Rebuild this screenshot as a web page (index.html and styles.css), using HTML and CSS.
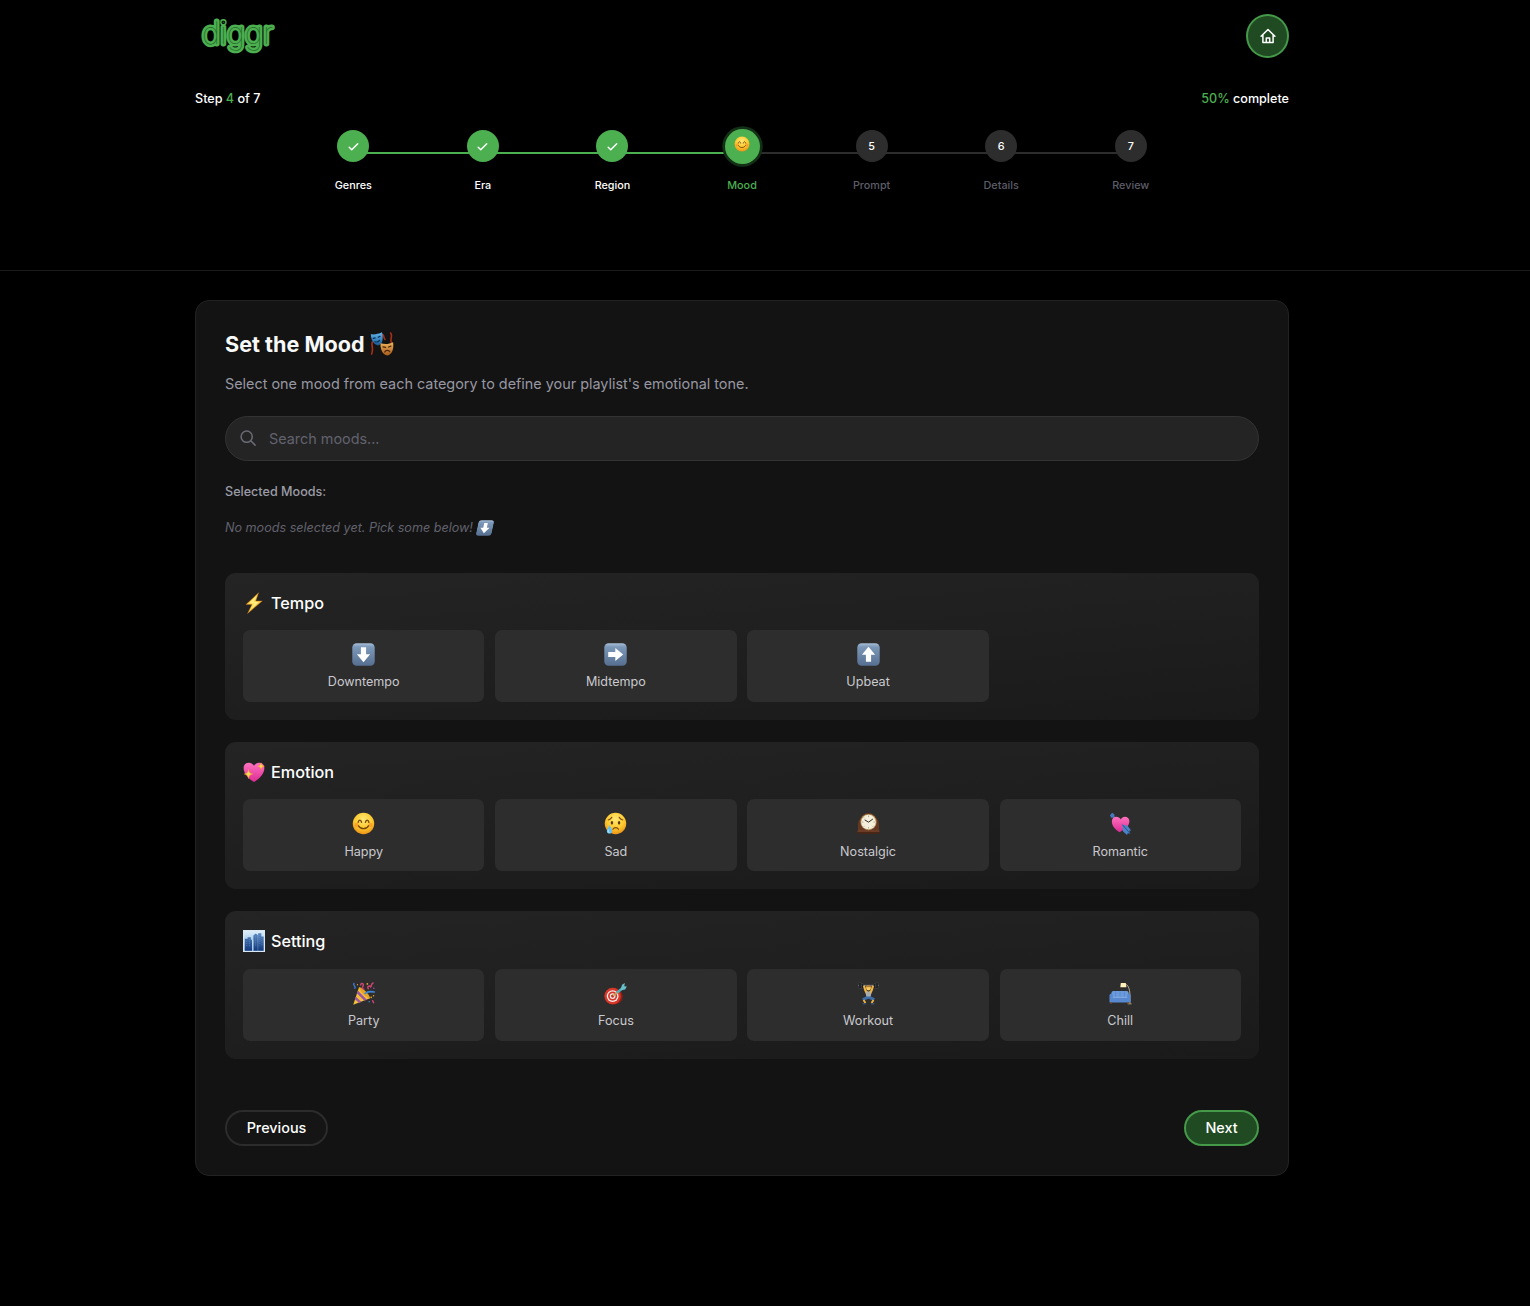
FILE: index.html
```html
<!DOCTYPE html>
<html lang="en">
<head>
<meta charset="utf-8">
<title>diggr – Set the Mood</title>
<link rel="stylesheet" href="styles.css">
</head>
<body>
<svg class="sprite" aria-hidden="true">
  <defs>
    <linearGradient id="g-key" x1="0" y1="0" x2="0" y2="1"><stop offset="0" stop-color="#a9bfd8"/><stop offset=".16" stop-color="#7c98b9"/><stop offset="1" stop-color="#566f90"/></linearGradient>
    <radialGradient id="g-face" cx=".5" cy=".3" r=".75"><stop offset="0" stop-color="#ffe873"/><stop offset=".55" stop-color="#fdc92e"/><stop offset="1" stop-color="#e98a14"/></radialGradient>
    <linearGradient id="g-heart" x1="0" y1="0" x2="0" y2="1"><stop offset="0" stop-color="#ff72c0"/><stop offset="1" stop-color="#dc2b93"/></linearGradient>
    <linearGradient id="g-bolt" x1="0" y1="0" x2="1" y2="1"><stop offset="0" stop-color="#f39a1e"/><stop offset=".5" stop-color="#ffdf52"/><stop offset="1" stop-color="#e88d19"/></linearGradient>
    <linearGradient id="g-blue" x1="0" y1="0" x2="0" y2="1"><stop offset="0" stop-color="#63b7ef"/><stop offset="1" stop-color="#175795"/></linearGradient>
    <linearGradient id="g-gold" x1="0" y1="0" x2="0" y2="1"><stop offset="0" stop-color="#eeb45b"/><stop offset="1" stop-color="#a85b1c"/></linearGradient>
    <linearGradient id="g-sky" x1="0" y1="0" x2="0" y2="1"><stop offset="0" stop-color="#dceefa"/><stop offset="1" stop-color="#6ea9dc"/></linearGradient>
    <linearGradient id="g-tower" x1="0" y1="0" x2="0" y2="1"><stop offset="0" stop-color="#5b88c2"/><stop offset="1" stop-color="#153a7d"/></linearGradient>
  </defs>
  <symbol id="e-down" viewBox="0 0 24 24"><rect x=".3" y=".3" width="23.4" height="23.4" rx="4.5" fill="url(#g-key)"/><path d="M9.3 4.5h5.4v7.3h4.2L12 20 5.1 11.8h4.2z" fill="#fff"/></symbol>
  <symbol id="e-right" viewBox="0 0 24 24"><rect x=".3" y=".3" width="23.4" height="23.4" rx="4.5" fill="url(#g-key)"/><path d="M4.4 9.3v5.4h7.4v4.2L20 12 11.8 5.1v4.2z" fill="#fff"/></symbol>
  <symbol id="e-up" viewBox="0 0 24 24"><rect x=".3" y=".3" width="23.4" height="23.4" rx="4.5" fill="url(#g-key)"/><path d="M9.3 19.5h5.4v-7.3h4.2L12 4 5.1 12.2h4.2z" fill="#fff"/></symbol>
  <symbol id="e-happy" viewBox="0 0 24 24">
    <circle cx="12" cy="12" r="11.2" fill="url(#g-face)"/>
    <g fill="none" stroke="#76480d" stroke-linecap="round"><path d="M6.4 10.7c.7-3 2.900-3 3.600 0M14 10.700c.7-3 2.900-3 3.600 0" stroke-width="1.4"/><path d="M6.600 14.200c2.500 4.300 8.300 4.300 10.800 0" stroke-width="1.3"/></g>
    <circle cx="4.8" cy="13.5" r="2.2" fill="#f57b24" opacity=".45"/><circle cx="19.2" cy="13.5" r="2.2" fill="#f57b24" opacity=".45"/>
  </symbol>
  <symbol id="e-sad" viewBox="0 0 24 24">
    <circle cx="12" cy="12" r="11.2" fill="url(#g-face)"/>
    <ellipse cx="8.3" cy="11.3" rx="1.3" ry="1.9" fill="#5e3a10"/><ellipse cx="15.7" cy="11.3" rx="1.3" ry="1.9" fill="#5e3a10"/>
    <path d="M4.400 8.300c1.600-.4 3-1.400 3.700-2.700M19.600 8.300c-1.600-.4-3-1.400-3.700-2.700M9.300 18c1.300-2.200 4.500-2.200 5.800 0" fill="none" stroke="#76480d" stroke-width="1.2" stroke-linecap="round"/>
    <path d="M5.800 13.600c1.300 2.800 2.600 4.400 2.600 6.100a2.700 2.700 0 0 1-5.400 0c0-1.700 1.600-3.300 2.800-6.100z" fill="#64c0f2"/><path d="M4.500 18.500c-.6 2 .2 3 1.300 3" stroke="#c8ecff" fill="none"/>
  </symbol>
  <symbol id="e-masks" viewBox="0 0 24 24">
    <path d="M2.300 10c-1.200 4 1.500 6-.6 12M20.600 1c2.600 3-1.200 6 1 10M12.500 2.500c2 1 .6 3 2.500 5" fill="none" stroke="#a92f16" stroke-width="1.6" stroke-linecap="round"/>
    <path d="M.8 2.300C4.800 2.700 8.600 2 12 .3c1.400 5.300 1.200 12-4 13.200C3.200 12.300 1 7.200.8 2.300z" fill="url(#g-blue)"/>
    <path d="M3.200 6.300l2-.5M8.200 5.200l1.800-.8M5 9.700c1.600.6 3.300.2 4.500-1.200" fill="none" stroke="#0b3156" stroke-width="1.200" stroke-linecap="round"/>
    <path d="M10.600 11.200c4.400 1.300 8.500.9 12.500-1 .9 5.700-.6 12.300-5.800 13.300-5-.7-7.300-7-6.700-12.300z" fill="url(#g-gold)"/>
    <path d="M13 14.800l2.600.5M18.600 15l2.300-.8M14.800 20c.8-2 3.900-2.200 4.900-.4" fill="none" stroke="#4e240a" stroke-width="1.300" stroke-linecap="round"/>
  </symbol>
  <symbol id="e-bolt" viewBox="0 0 24 24"><path d="M17 .8L3.200 13.700h6.600L5 23.400 21 9.800h-7.100z" fill="url(#g-bolt)" stroke="#b9691a" stroke-width=".5"/><path d="M15 3.500L6.800 12.300h5.600l-3.200 6L17.500 11h-6z" fill="#ffed86"/></symbol>
  <symbol id="e-sparkheart" viewBox="0 0 24 24">
    <path d="M12 23C5 18.500.7 13.200.7 7.600.7 1.200 9 .2 12 5.200 15 .2 23.300 1.200 23.300 7.600 23.300 13.200 19 18.500 12 23z" fill="url(#g-heart)"/>
    <path d="M6 9.200c.7 3.400 1.500 4.300 4.700 5-3.200.7-4 1.600-4.700 5-.7-3.400-1.500-4.300-4.700-5 3.200-.7 4-1.600 4.700-5zM19.700 2c.5 2.500 1.200 3.200 3.600 3.700-2.400.5-3.100 1.200-3.600 3.700-.5-2.500-1.200-3.200-3.600-3.700 2.400-.5 3.100-1.200 3.600-3.700z" fill="#ffd955" stroke="#ef9b26" stroke-width=".5"/>
  </symbol>
  <symbol id="e-city" viewBox="0 0 24 24">
    <rect width="24" height="24" fill="#d9e8f3"/><rect x="1.5" y="1.5" width="21" height="21" fill="url(#g-sky)"/>
    <path d="M2 22.500V9.500h3V8h3.600v2.500H10v12zM11.300 22.500V6l2.500-2.200 2.300 1.700v17zM16.500 22.500V3.500H20V7h2.500v15.500z" fill="url(#g-tower)"/>
    <path d="M4 12v6M7 10v8M13.700 7v11M18.300 5.500V17M20.700 9v8" stroke="#7ea9d8" stroke-width=".5" stroke-dasharray="1 1.200"/><path d="M10.700 11v11.500" stroke="#c9e6fa" stroke-width="1"/>
  </symbol>
  <symbol id="e-clock" viewBox="0 0 24 24">
    <path d="M1 20.500V14C1 9.500 2.500 7.500 4 6c1.500-3 4.500-5 8-5s6.500 2 8 5c1.500 1.500 3 3.500 3 8v6.500z" fill="#643722"/><path d="M.5 20h23v2.800H.5z" fill="#4a2617"/><path d="M.5 20h23" stroke="#8d5236" stroke-width=".8"/>
    <circle cx="12" cy="10.500" r="8.500" fill="#b3935d"/><circle cx="12" cy="10.500" r="7.600" fill="#f4eedb"/>
    <path d="M12 3.800v1.400M12 15.800v1.400M5.300 10.500h1.400M17.300 10.500h1.400M7.200 5.700l.8.800M16.800 15.300l-.8-.8M7.200 15.300l.8-.8" stroke="#8b8273" stroke-width=".7"/><path d="M8 8.200l4 2.400 4.600-3.300" fill="none" stroke="#28221d" stroke-width="1"/>
  </symbol>
  <symbol id="e-cupid" viewBox="0 0 24 24">
    <path d="M3 3l18 18" stroke="#355f9f" stroke-width="1.5"/><path d="M1 3.500L3.300.8l2.500 1.700-.4 3.200-3.200.2z" fill="#4678bd"/>
    <path d="M11 21C5.500 17.500 2.800 13.600 3 9.300 3.200 4.300 9.800 3.200 12.300 7.800c2.200-4.600 9-3.300 9 1.900 0 4.500-4.300 8.800-10.300 11.300z" fill="url(#g-heart)"/>
    <path d="M13.800 13l5.500 1.300 3.800 5-2.200.3 1 2.800-2.600-.3-.3 2-4.300-3.800z" fill="#4b83c8"/><path d="M14 13.200l8 9.300" stroke="#25518d" stroke-width="1"/>
  </symbol>
  <symbol id="e-party" viewBox="0 0 24 24">
    <path d="M7.300 5.500L18.800 17 1.300 23.700z" fill="#f6bf37"/><path d="M6.300 9.200l9.300 9.300-2.600 1L5 11.800zM4 15.300l6 5.500-2.500 1L3 18z" fill="#9c55a4"/><path d="M7.300 5.500c3-.5 11.500 7.500 11.500 11.500-3 .5-11-7.500-11.500-11.500z" fill="#e5a52a"/>
    <g fill="none" stroke-width="1.6" stroke-linecap="round"><path d="M13.500 12c2.500-2.200 6-2.300 9.700-1.500" stroke="#3d86d7"/><path d="M2 1.500c-1.500 2.300 2.500 2.500 1 5" stroke="#3c72d0"/><path d="M9 3c1-3 3.800-1 2.300 1.500-1 2 0 3 1 3M17 7c-2-3 2-3 2.500-2 1.500-1 0-3 2.500-4M21.500 19.500l1 2" stroke="#c84370"/></g>
    <g fill="#e7a82d"><circle cx="16" cy="2" r=".9"/><circle cx="5.7" cy="2.800" r=".7"/><circle cx="20" cy="16" r=".9"/><circle cx="22.5" cy="14.300" r=".8"/></g><circle cx="18" cy="20.500" r=".8" fill="#3d86d7"/><circle cx="22.800" cy="6.500" r=".8" fill="#a349a4"/>
  </symbol>
  <symbol id="e-dart" viewBox="0 0 24 24">
    <ellipse cx="10" cy="15" rx="9.5" ry="8.700" fill="#8f1d17"/><circle cx="9" cy="14.700" r="8.600" fill="#d7382c"/><circle cx="9" cy="14.700" r="6.200" fill="#f6eeea"/><circle cx="9" cy="14.700" r="4.800" fill="#d7382c"/><circle cx="9" cy="14.700" r="3" fill="#f6eeea"/><circle cx="9" cy="14.700" r="1.700" fill="#c92d24"/>
    <path d="M9.500 14.500L15 10" stroke="#caa055" stroke-width="1.800"/><path d="M13.500 11.200L20.500 5.500" stroke="#51aebd" stroke-width="2.600"/><path d="M17.500 7.500l1.300-4.700L21.700 1l-.5 3.500 2.600.2-1.700 3-4 1z" fill="#67bfca"/>
  </symbol>
  <symbol id="e-lifter" viewBox="0 0 24 24">
    <path d="M1 3.500h22" stroke="#7a7d82" stroke-width="1"/>
    <g fill="#17191c" stroke="#54585d" stroke-width=".5"><rect x="2" y=".5" width="2.200" height="6.500" rx="1"/><rect x="4.600" y="1.500" width="2" height="5.500" rx=".8"/><rect x="19.800" y=".5" width="2.200" height="6.500" rx="1"/><rect x="17.400" y="1.500" width="2" height="5.500" rx=".8"/></g>
    <path d="M7.300 3.800L8.700 8.800 12 12.500l3.300-3.700 1.400-5" fill="none" stroke="#f0b440" stroke-width="2.200" stroke-linejoin="round"/>
    <circle cx="12" cy="6.300" r="2.600" fill="#f8ca62"/><path d="M9.500 5.400c.3-3 4.700-3 5 0z" fill="#b47b30"/>
    <path d="M8.800 9.800h6.400l-1 6.200H9.800z" fill="#a4abb2"/><path d="M9.700 12.200L9 9.500M14.300 12.200l.7-2.700" stroke="#f0b440" stroke-width="1.200"/>
    <path d="M9.600 15.200h4.800l4.300 1.700-1.300 2.600L12 17.600l-5.400 1.900-1.300-2.600z" fill="#3d6ca6"/>
    <path d="M6.800 18.800l2 3.200M17.200 18.800l-2 3.200" stroke="#f0b440" stroke-width="2"/><path d="M5.800 22.700h3.700M14.500 22.700h3.700" stroke="#3d4f68" stroke-width="1.700"/>
  </symbol>
  <symbol id="e-couch" viewBox="0 0 24 24">
    <path d="M15 2.200c5-1.500 8 6 6.800 20" fill="none" stroke="#b5aa90" stroke-width="1"/><path d="M19.500 22.700h4" stroke="#9d8a61" stroke-width="1.300"/>
    <path d="M2.500 12c0-1.600.5-2.700 2-2.700h14c1.500 0 2 1.100 2 2.700v5h-18z" fill="#6a9bdd"/><path d="M7 10v6M11.500 10v6M16 10v6" stroke="#5282c6" stroke-width=".6"/><path d="M.5 13.800c0-2.200 3.500-2.200 3.500 0v2h15v-2c0-2.200 3.500-2.200 3.500 0v7.500H.5z" fill="#5889d0"/><path d="M4 16h15" stroke="#86ade3" stroke-width="1"/><path d="M2 21.200v1.500M20 21.200v1.500" stroke="#7e5230" stroke-width="1.500"/>
    <path d="M12.300 1l5.200.1.700 4.400h-6.400z" fill="#fff2bb"/>
  </symbol>
  <symbol id="i-check" viewBox="0 0 12 12"><path d="M1.300 6.900l2.800 2.700L10.600 3" fill="none" stroke="#fff" stroke-width="1.600" stroke-linecap="round" stroke-linejoin="round"/></symbol>
</svg>

<header class="header">
  <div class="container">
    <div class="topbar">
      <svg class="logo" viewBox="0 0 80 43" role="img" aria-label="diggr"><text class="logo-text" x="7" y="29.5" textLength="71" lengthAdjust="spacingAndGlyphs">diggr</text></svg>
      <button class="home" aria-label="Home"><svg class="home-icon" viewBox="0 0 16 16"><path d="M1.100 8.300L8 1.500l6.900 6.800M2.900 7v7.500h10.200V7M6.300 14.300V10h3.400v4.300"/></svg></button>
    </div>
    <div class="status"><span>Step <b>4</b> of 7</span><span><b>50%</b> complete</span></div>
    <div class="stepper">
      <div class="track"><div class="track-fill" style="width:50%"></div></div>
      <div class="step done"><div class="dot-box"><span class="dot"><svg class="check"><use href="#i-check"/></svg></span></div><span class="label">Genres</span></div>
      <div class="step done"><div class="dot-box"><span class="dot"><svg class="check"><use href="#i-check"/></svg></span></div><span class="label">Era</span></div>
      <div class="step done"><div class="dot-box"><span class="dot"><svg class="check"><use href="#i-check"/></svg></span></div><span class="label">Region</span></div>
      <div class="step active"><div class="dot-box"><span class="dot"><svg class="dot-emoji"><use href="#e-happy"/></svg></span></div><span class="label">Mood</span></div>
      <div class="step"><div class="dot-box"><span class="dot">5</span></div><span class="label">Prompt</span></div>
      <div class="step"><div class="dot-box"><span class="dot">6</span></div><span class="label">Details</span></div>
      <div class="step"><div class="dot-box"><span class="dot">7</span></div><span class="label">Review</span></div>
    </div>
  </div>
</header>

<main class="container">
  <section class="card">
    <h1 class="title">Set the Mood <svg class="title-emoji"><use href="#e-masks"/></svg></h1>
    <p class="subtitle">Select one mood from each category to define your playlist's emotional tone.</p>
    <div class="search">
      <svg class="search-icon" viewBox="0 0 16 16"><circle cx="6.700" cy="6.700" r="5.600"/><path d="M10.800 10.800l4.300 4.300"/></svg>
      <input class="search-input" type="text" placeholder="Search moods...">
    </div>
    <p class="selected">Selected Moods:</p>
    <p class="empty">No moods selected yet. Pick some below! <svg class="empty-emoji"><use href="#e-down"/></svg></p>

    <div class="categories">
      <section class="category">
        <h2 class="category-title"><svg class="category-emoji"><use href="#e-bolt"/></svg>Tempo</h2>
        <div class="moods">
          <button class="mood"><svg class="emoji"><use href="#e-down"/></svg>Downtempo</button>
          <button class="mood"><svg class="emoji"><use href="#e-right"/></svg>Midtempo</button>
          <button class="mood"><svg class="emoji"><use href="#e-up"/></svg>Upbeat</button>
        </div>
      </section>
      <section class="category">
        <h2 class="category-title"><svg class="category-emoji"><use href="#e-sparkheart"/></svg>Emotion</h2>
        <div class="moods">
          <button class="mood"><svg class="emoji"><use href="#e-happy"/></svg>Happy</button>
          <button class="mood"><svg class="emoji"><use href="#e-sad"/></svg>Sad</button>
          <button class="mood"><svg class="emoji"><use href="#e-clock"/></svg>Nostalgic</button>
          <button class="mood"><svg class="emoji"><use href="#e-cupid"/></svg>Romantic</button>
        </div>
      </section>
      <section class="category">
        <h2 class="category-title"><svg class="category-emoji"><use href="#e-city"/></svg>Setting</h2>
        <div class="moods">
          <button class="mood"><svg class="emoji"><use href="#e-party"/></svg>Party</button>
          <button class="mood"><svg class="emoji"><use href="#e-dart"/></svg>Focus</button>
          <button class="mood"><svg class="emoji"><use href="#e-lifter"/></svg>Workout</button>
          <button class="mood"><svg class="emoji"><use href="#e-couch"/></svg>Chill</button>
        </div>
      </section>
    </div>

    <div class="actions">
      <button class="btn">Previous</button>
      <button class="btn btn-next">Next</button>
    </div>
  </section>
</main>
</body>
</html>
```
FILE: styles.css
```css
* { box-sizing: border-box; margin: 0; }
body { min-height: 1306px; background: #000; color: #fff; font-family: Inter, sans-serif; }
button { font: inherit; color: inherit; border: 0; padding: 0; }
svg { display: block; flex: none; }
.sprite { position: absolute; width: 0; height: 0; }
.container { width: 1094px; margin-left: 195px; }

.header { height: 271px; padding-top: 14px; border-bottom: 1px solid #1b1b1b; }
.topbar { display: flex; justify-content: space-between; height: 44px; }
.logo { width: 80px; height: 43px; overflow: visible; }
.logo-text { font-family: Inter, sans-serif; font-size: 31px; font-weight: 100; fill: #236b27; stroke: #4caf50; stroke-width: 5px; stroke-linejoin: round; paint-order: stroke; }
.home { display: flex; align-items: center; justify-content: center; width: 43px; height: 44px; border-radius: 50%; background: #204a22; border: 2px solid #459a49; }
.home-icon { width: 16px; height: 16px; fill: none; stroke: #fff; stroke-width: 1.5; stroke-linecap: round; stroke-linejoin: round; }
.status { display: flex; justify-content: space-between; margin-top: 31px; font-size: 12.6px; line-height: 20px; font-weight: 500; }
.status b { color: #4caf50; font-weight: 500; }
.stepper { position: relative; display: flex; width: 907px; margin: 19px auto 0; }
.track { position: absolute; left: 65px; top: 24px; width: 777px; height: 2px; background: #2d2d2d; }
.track-fill { height: 100%; background: #4caf50; }
.step { position: relative; flex: 1; display: flex; flex-direction: column; align-items: center; gap: 14px; color: #5d5d68; }
.dot-box { display: flex; align-items: center; height: 36px; }
.dot { display: flex; align-items: center; justify-content: center; width: 32px; height: 32px; border-radius: 50%; background: #2d2d2d; color: #fff; font-size: 10.8px; font-weight: 500; }
.done .dot, .active .dot { background: #4caf50; }
.active .dot { width: 35px; height: 35px; box-shadow: 0 0 0 2.7px #133016; padding-bottom: 4px; }
.check { width: 11px; height: 11px; }
.dot-emoji { width: 16px; height: 16px; }
.label { font-size: 10.8px; line-height: 16px; font-weight: 500; }
.done .label { color: #fff; }
.active .label { color: #4caf50; }

.card { margin-top: 29px; padding: 29px; border: 1px solid #222; border-radius: 14px; background: #131313; }
.title { display: flex; align-items: center; gap: 5px; height: 28px; font-size: 21.6px; line-height: 28px; font-weight: 700; color: #f8f8f8; }
.title-emoji { width: 24px; height: 24px; }
.subtitle { margin-top: 15px; font-size: 14.4px; line-height: 22px; color: #9797a2; }
.search { display: flex; align-items: center; height: 45px; margin-top: 21px; padding: 0 14px; border: 1px solid #333; border-radius: 23px; background: #242424; }
.search-icon { width: 16px; height: 16px; margin: 0 13px 2px 0; fill: none; stroke: #6b6b78; stroke-width: 1.5; stroke-linecap: round; }
.search-input { flex: 1; padding: 0; border: 0; outline: 0; background: none; color: #fff; font: 14.4px Inter, sans-serif; }
.search-input::placeholder { color: #62626e; }
.selected { margin-top: 23px; font-size: 12.6px; line-height: 16px; font-weight: 500; color: #9c9ca7; }
.empty { display: flex; align-items: center; gap: 4px; margin-top: 18px; font-size: 12.6px; line-height: 20px; font-style: italic; color: #62626d; }
.empty-emoji { width: 16px; height: 16px; transform: skewX(-12deg); }

.categories { display: flex; flex-direction: column; gap: 22px; margin-top: 35px; }
.category { padding: 18px; border-radius: 11px; background: linear-gradient(175deg, #242424, #1a1a1a); }
.category-title { display: flex; align-items: center; gap: 6px; margin-bottom: 15.2px; font-size: 16.2px; line-height: 24px; font-weight: 500; }
.category-emoji { width: 22px; height: 22px; }
.moods { display: grid; grid-template-columns: repeat(4, 1fr); gap: 10.7px; }
.mood { display: flex; flex-direction: column; align-items: center; gap: 8.2px; height: 72px; padding-top: 13px; border-radius: 7px; background: #2d2d2d; color: #c9c9ce; font-size: 12.6px; line-height: 16px; }
.emoji { width: 23px; height: 23px; }

.actions { display: flex; justify-content: space-between; margin-top: 51.4px; }
.btn { width: 103px; height: 36px; border: 2px solid #2c2c2c; border-radius: 18px; background: #151515; font-size: 14.4px; font-weight: 500; }
.btn-next { width: 75px; border-color: #459a49; background: #204a22; }
```
